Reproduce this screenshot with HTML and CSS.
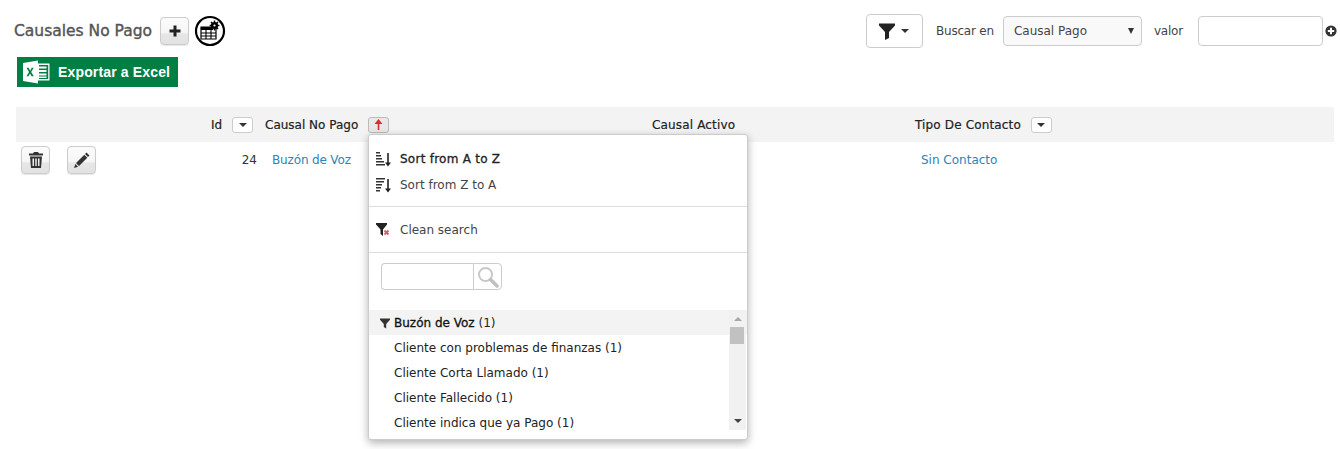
FILE: index.html
```html
<!DOCTYPE html>
<html lang="en">
  <head>
    <meta charset="UTF-8" />
    <meta name="viewport" content="width=device-width, initial-scale=1" />
    <title>Causales No Pago</title>
    <link rel="stylesheet" href="styles.css">
  </head>
  <body>
    <!-- Title and search bar -->
    <div class="top-bar">
      <div class="title-group">
        <h1 class="page-title">Causales No Pago</h1>
        <button class="icon-btn add-btn" aria-label="Agregar">
          <svg width="14" height="14" viewBox="0 0 14 14"><path d="M5.500 1.500h3v4h4v3h-4v4h-3v-4h-4v-3h4z" fill="#222"/></svg>
        </button>
        <svg class="config-icon" width="32" height="32" viewBox="0 0 32 32">
          <circle cx="16" cy="16" r="14" fill="#fff" stroke="#000" stroke-width="2.200"/>
          <path d="M7 12h15v12H7z" fill="#fff" stroke="#000" stroke-width="1.200"/>
          <path d="M7 12h12v3H7z" fill="#000"/>
          <path d="M7 18h15M7 21h15M12 15v9M17 15v9" stroke="#000" stroke-width="1.100" fill="none"/>
          <circle cx="20.500" cy="10.500" r="3.600" fill="#000"/>
          <path d="M20.500 5.600v9.800M15.600 10.500h9.800M17 7l7 7M24 7l-7 7" stroke="#000" stroke-width="1.500"/>
          <circle cx="20.500" cy="10.500" r="1.100" fill="#fff"/>
        </svg>
      </div>
      <div class="search-group">
        <button class="filter-btn" aria-label="Filtro">
          <svg width="16" height="17" viewBox="0 0 16 17"><path d="M0 .5h16v2L10 9v6l-4 2V9L0 2.500z" fill="#222"/></svg>
          <span class="caret"></span>
        </button>
        <label class="search-label search-label-first">Buscar en</label>
        <div class="select-wrap">
          <select class="search-select"><option>Causal Pago</option></select>
        </div>
        <label class="search-label search-label-value">valor</label>
        <input class="search-input" type="text" />
        <svg class="add-circle" width="12" height="12" viewBox="0 0 12 12"><circle cx="6" cy="6" r="5.600" fill="#333"/><path d="M5 2.800h2V5h2.200v2H7v2.200H5V7H2.800V5H5z" fill="#fff"/></svg>
      </div>
    </div>

    <!-- Excel export -->
    <a class="excel-btn" href="#">
      <svg width="27" height="24" viewBox="0 0 27 24">
        <path d="M0 3 15 .5v23L0 21z" fill="#fff"/>
        <path d="M15 3.500h11.500v17H15z" fill="#fff"/>
        <path d="M16 5h9.200v14H16z" fill="#007f45"/>
        <path d="M15 6.500h8.500v2H15zM15 10h8.500v2H15zM15 13.500h8.500v2H15zM15 16.500h8.500v1.500H15z" fill="#fff"/>
        <path d="M3.500 7.800h2.100l1.600 2.900 1.500-2.900h2l-2.500 4.200 2.600 4.300H8.600l-1.500-2.900-1.600 2.900h-2L6 12z" fill="#007f45"/>
      </svg>
      <span>Exportar a Excel</span>
    </a>

    <!-- Table -->
    <div class="grid-table">
      <div class="grid-row grid-head">
        <div></div>
        <div class="cell-id">Id <button class="col-btn"><span class="caret"></span></button></div>
        <div class="head-cell">Causal No Pago <button class="col-btn col-btn-sorted">
          <svg width="9" height="11" viewBox="0 0 9 11"><path d="M4.500 0 8.500 5H5.300v6H3.700V5H.5z" fill="#d9302c"/></svg>
        </button></div>
        <div class="head-cell head-cell-active">Causal Activo</div>
        <div class="head-cell head-cell-wide">Tipo De Contacto <button class="col-btn"><span class="caret"></span></button></div>
      </div>
      <div class="grid-row grid-data">
        <div class="row-actions">
          <button class="icon-btn" aria-label="Borrar">
            <svg width="14" height="16" viewBox="0 0 14 16"><path d="M5 0h4l1 1.500h4v2H0v-2h4zM1 4.500h12L12 16H2zM3.500 6.500v7.500h1.500V6.500zM6.250 6.500v7.500h1.500V6.500zM9 6.500v7.500h1.500V6.500z" fill="#333" fill-rule="evenodd"/></svg>
          </button>
          <button class="icon-btn" aria-label="Editar">
            <svg width="16" height="16" viewBox="0 0 16 16"><path d="M12.500 .5 15.500 3.500 14 5 11 2zM10.300 2.800l3 3L5 14.100 2 11.100zM1.400 12 4.100 14.700 0 16z" fill="#333"/></svg>
          </button>
        </div>
        <div class="cell-num">24</div>
        <div class="data-cell"><a class="link-tight" href="#">Buzón de Voz</a></div>
        <div class="data-cell"></div>
        <div class="data-cell data-cell-last"><a href="#">Sin Contacto</a></div>
      </div>

      <!-- Column filter menu -->
      <div class="col-menu">
        <div class="menu-section menu-sort">
          <div class="menu-item menu-item-strong">
            <svg width="16" height="16" viewBox="0 0 16 16"><path d="M0 1h4v1.500H0zM0 4h5v1.500H0zM0 7h6v1.500H0zM0 10h8v1.500H0zM0 13h9v1.500H0z" fill="#333"/><path d="M11.200 2h1.600v9.500H15L12 15.500 9 11.500h2.200z" fill="#222"/></svg>
            <span>Sort from A to Z</span>
          </div>
          <div class="menu-item">
            <svg width="16" height="16" viewBox="0 0 16 16"><path d="M0 1h9v1.500H0zM0 4h8v1.500H0zM0 7h6v1.500H0zM0 10h5v1.500H0zM0 13h4v1.500H0z" fill="#333"/><path d="M11.200 2h1.600v9.500H15L12 15.500 9 11.500h2.200z" fill="#222"/></svg>
            <span>Sort from Z to A</span>
          </div>
        </div>
        <div class="menu-section menu-clean">
          <div class="menu-item">
            <svg width="16" height="16" viewBox="0 0 16 16"><path d="M0 1h11v1.500L7 7.500V14L4.500 12V7.500L0 2.500z" fill="#222"/><path d="m8.500 8.500 4 4M12.500 8.500l-4 4" stroke="#d9606a" stroke-width="2"/></svg>
            <span>Clean search</span>
          </div>
        </div>
        <div class="menu-find">
          <input type="text" class="find-input" />
          <span class="find-btn">
            <svg width="22" height="22" viewBox="0 0 22 22"><circle cx="8.500" cy="8.500" r="6.500" fill="#fff" stroke="#c8c8c8" stroke-width="2"/><path d="m13.500 13.500 6.500 6.500" stroke="#c0c0c0" stroke-width="3.500" stroke-linecap="round"/></svg>
          </span>
        </div>
        <div class="menu-list-wrap">
          <ul class="menu-list">
            <li class="selected">
              <svg width="10" height="11" viewBox="0 0 10 11"><path d="M0 .5h10v1.300L6.200 6v4.500L3.800 9V6L0 1.800z" fill="#333"/></svg>
              <span class="selected-name">Buzón de Voz</span> (1)
            </li>
            <li>Cliente con problemas de finanzas (1)</li>
            <li>Cliente Corta Llamado (1)</li>
            <li>Cliente Fallecido (1)</li>
            <li>Cliente indica que ya Pago (1)</li>
          </ul>
          <div class="fake-scroll">
            <span class="scroll-up"></span>
            <span class="scroll-thumb"></span>
            <span class="scroll-down"></span>
          </div>
        </div>
      </div>
    </div>
  </body>
</html>
```

FILE: styles.css
```css
/* Global */
html,
body {
  margin: 0;
  height: 100%;
  overflow: hidden;
  background-color: #fff;
  font-family: "DejaVu Sans", sans-serif;
  font-size: 12px;
  color: #333;
}
button {
  font-family: inherit;
  cursor: pointer;
}
a {
  color: #2a85b8;
  text-decoration: none;
}
.caret {
  display: inline-block;
  border-left: 4px solid transparent;
  border-right: 4px solid transparent;
  border-top: 4px solid #333;
}

/* Top bar */
.top-bar {
  display: flex;
  justify-content: space-between;
  align-items: flex-start;
  padding: 14px 3px 0 14px;
}
.title-group {
  display: flex;
  align-items: center;
  height: 34px;
}
.page-title {
  margin: 0;
  font-size: 15.5px;
  font-weight: normal;
  color: #555;
  -webkit-text-stroke: 0.4px #555;
}
.icon-btn {
  display: inline-flex;
  justify-content: center;
  align-items: center;
  width: 29px;
  height: 28px;
  padding: 0;
  border: 1px solid #ccc;
  border-radius: 4px;
  background: linear-gradient(#fbfbfb 0%, #f6f6f6 55%, #e6e6e6 62%, #e2e2e2 100%);
  box-shadow: 0 1px 1px rgba(0, 0, 0, 0.1);
}
.add-btn {
  margin-left: 8px;
}
.config-icon {
  margin-left: 5px;
}
.search-group {
  display: flex;
  align-items: center;
  height: 34px;
}
.filter-btn {
  display: flex;
  align-items: center;
  justify-content: center;
  gap: 6px;
  width: 57px;
  height: 34px;
  padding: 0;
  background: #fff;
  border: 1px solid #ccc;
  border-radius: 4px;
}
.search-label {
  color: #444;
  letter-spacing: -0.2px;
}
.search-label-first {
  margin: 0 9px 0 13px;
}
.search-label-value {
  margin: 0 15px 0 12px;
}
.select-wrap {
  position: relative;
  display: flex;
}
.select-wrap::after {
  content: "";
  position: absolute;
  top: 12px;
  right: 8px;
  border-left: 3px solid transparent;
  border-right: 3px solid transparent;
  border-top: 6px solid #333;
}
.search-select {
  appearance: none;
  width: 139px;
  height: 30px;
  padding: 0 10px;
  font-family: inherit;
  font-size: 12px;
  color: #444;
  background: #f9f9f9;
  border: 1px solid #ccc;
  border-radius: 4px;
}
.search-input {
  box-sizing: border-box;
  width: 125px;
  height: 30px;
  background: #fff;
  border: 1px solid #ccc;
  border-radius: 4px;
}
.add-circle {
  margin-left: 2px;
}

/* Excel button */
.excel-btn {
  display: flex;
  align-items: center;
  gap: 8px;
  box-sizing: border-box;
  width: 161px;
  height: 30px;
  margin: 9px 0 0 17px;
  padding-left: 6px;
  background: #007f45;
  color: #fff;
  font-family: "Liberation Sans", sans-serif;
  font-size: 14px;
  font-weight: bold;
  letter-spacing: 0.15px;
}

/* Table */
.grid-table {
  position: relative;
  margin: 20px 6px 0 16px;
}
.grid-row {
  display: grid;
  grid-template-columns: 190px 52px 388px 262px 1fr;
}
.grid-head {
  align-items: center;
  height: 35px;
  background: #f3f3f3;
  color: #222;
  -webkit-text-stroke: 0.2px #222;
}
.head-cell {
  padding-left: 7px;
}
.head-cell-active {
  padding-left: 6px;
  letter-spacing: 0.15px;
}
.head-cell-wide {
  letter-spacing: 0.15px;
}
.cell-id {
  margin-left: -20px;
  text-align: right;
  padding-right: 5px;
}
.col-btn {
  display: inline-flex;
  justify-content: center;
  align-items: center;
  width: 21px;
  height: 16px;
  margin-left: 6px;
  padding: 0;
  vertical-align: middle;
  background: #fff;
  border: 1px solid #ccc;
  border-radius: 3px;
}
.col-btn-sorted {
  background: #e8e8e8;
  border-color: #bbb;
}
.grid-data {
  align-items: center;
  height: 35px;
}
.row-actions {
  display: flex;
  gap: 17px;
  padding-left: 5px;
}
.cell-num {
  text-align: right;
  padding-right: 1px;
}
.data-cell {
  padding-left: 14px;
}
.data-cell-last {
  padding-left: 13px;
}
.link-tight {
  letter-spacing: -0.15px;
}

/* Column filter menu */
.col-menu {
  position: absolute;
  top: 27px;
  left: 352px;
  width: 380px;
  height: 306px;
  box-sizing: border-box;
  background: #fff;
  border: 1px solid #ccc;
  border-radius: 3px;
  box-shadow: 0 3px 8px rgba(0, 0, 0, 0.3);
  color: #333;
}
.menu-section {
  border-bottom: 1px solid #ddd;
}
.menu-sort {
  padding: 11px 0 8px;
}
.menu-clean {
  padding: 10px 0 9px;
}
.menu-item {
  display: flex;
  align-items: center;
  gap: 8px;
  height: 26px;
  padding-left: 7px;
  color: #444;
}
.menu-item-strong {
  color: #222;
  letter-spacing: 0.25px;
  -webkit-text-stroke: 0.3px #222;
}
.menu-find {
  display: flex;
  padding: 10px 0 0 12px;
  height: 47px;
}
.find-input {
  box-sizing: border-box;
  width: 92px;
  height: 27px;
  border: 1px solid #ccc;
  border-right: none;
  border-radius: 4px 0 0 4px;
}
.find-btn {
  box-sizing: border-box;
  display: flex;
  justify-content: center;
  align-items: center;
  width: 29px;
  height: 27px;
  border: 1px solid #ccc;
  border-radius: 0 4px 4px 0;
}
.menu-list-wrap {
  position: relative;
  height: 120px;
  overflow: hidden;
}
.menu-list {
  list-style: none;
  margin: 0;
  padding: 0;
}
.menu-list li {
  position: relative;
  height: 25px;
  line-height: 26px;
  padding-left: 25px;
  color: #222;
}
.menu-list li.selected {
  background: #f3f3f3;
}
.menu-list li.selected svg {
  position: absolute;
  left: 11px;
  top: 8px;
}
.selected-name {
  color: #111;
  -webkit-text-stroke: 0.3px #111;
}
.fake-scroll {
  position: absolute;
  top: 0;
  right: 1px;
  bottom: 0;
  width: 17px;
  background: #f1f1f1;
}
.scroll-up,
.scroll-down {
  position: absolute;
  left: 5px;
  border-left: 4px solid transparent;
  border-right: 4px solid transparent;
}
.scroll-up {
  top: 7px;
  border-bottom: 4px solid #a8a8a8;
}
.scroll-down {
  bottom: 7px;
  border-top: 4px solid #444;
}
.scroll-thumb {
  position: absolute;
  top: 17px;
  left: 1px;
  width: 14px;
  height: 17px;
  background: #c1c1c1;
}
```
